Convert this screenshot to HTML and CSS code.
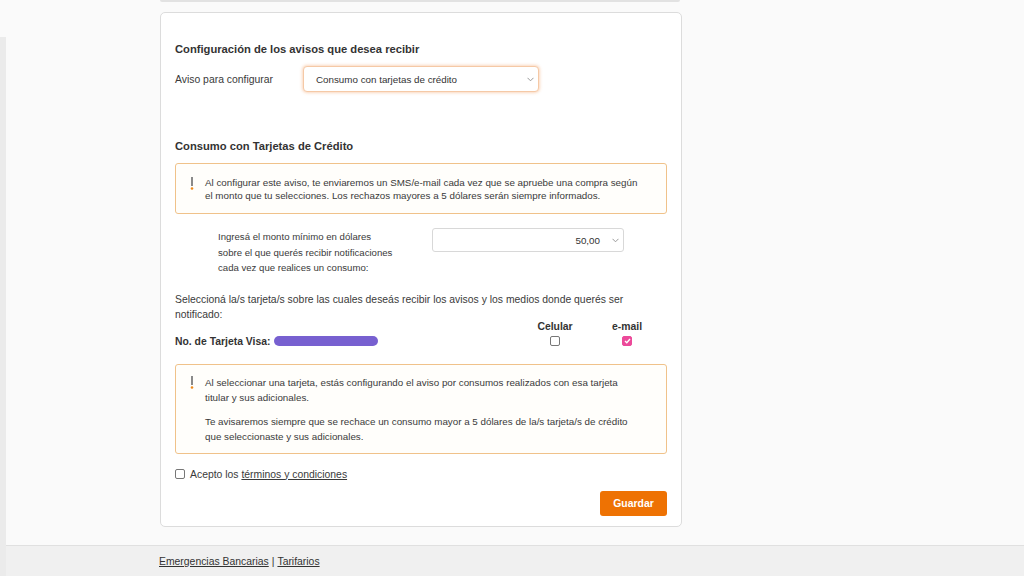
FILE: index.html
```html
<!DOCTYPE html>
<html lang="es">
<head>
    <meta charset="UTF-8">
    <meta name="viewport" content="width=device-width, initial-scale=1.0">
    <title>Configuración de avisos</title>
    <link rel="stylesheet" href="styles.css">
</head>
<body>

    <!-- Left edge strip -->
    <div class="edge"></div>

    <div class="page">
        <div class="main">
            <!-- Bottom of the previous card -->
            <div class="prev-card"></div>

            <div class="card">
                <h3 class="title">Configuración de los avisos que desea recibir</h3>
                <div class="field-row">
                    <label class="field-label">Aviso para configurar</label>
                    <div class="select select-focus">
                        <span>Consumo con tarjetas de crédito</span>
                        <svg class="chevron" width="7" height="5" viewBox="0 0 7 5"><path d="M0.5 0.8 L3.5 3.8 L6.5 0.8" fill="none" stroke="#999" stroke-width="1"/></svg>
                    </div>
                </div>

                <h3 class="title title-section">Consumo con Tarjetas de Crédito</h3>

                <div class="notice">
                    <svg class="bang" width="4" height="13" viewBox="0 0 4 13"><rect x="1" y="0" width="2" height="9" fill="#8a8a8a"/><circle cx="2" cy="11.5" r="1.3" fill="#f08a1c"/></svg>
                    <div class="notice-text">
                        <p>Al configurar este aviso, te enviaremos un SMS/e-mail cada vez que se apruebe una compra según el monto que tu selecciones. Los rechazos mayores a 5 dólares serán siempre informados.</p>
                    </div>
                </div>

                <div class="amount-row">
                    <p class="amount-label">Ingresá el monto mínimo en dólares<br>sobre el que querés recibir notificaciones<br>cada vez que realices un consumo:</p>
                    <div class="select select-amount">
                        <span>50,00</span>
                        <svg class="chevron" width="7" height="5" viewBox="0 0 7 5"><path d="M0.5 0.8 L3.5 3.8 L6.5 0.8" fill="none" stroke="#999" stroke-width="1"/></svg>
                    </div>
                </div>

                <p class="pick-text">Seleccioná la/s tarjeta/s sobre las cuales deseás recibir los avisos y los medios donde querés ser notificado:</p>

                <div class="cards-table">
                    <span></span>
                    <span class="col-head">Celular</span>
                    <span class="col-head">e-mail</span>

                    <span class="card-name">No. de Tarjeta Visa: <span class="redacted"></span></span>
                    <span class="col-check"><span class="check"></span></span>
                    <span class="col-check"><span class="check checked">
                        <svg width="7" height="6" viewBox="0 0 7 6"><path d="M1 3 L2.8 4.8 L6 1" fill="none" stroke="#fff" stroke-width="1.4"/></svg>
                    </span></span>
                </div>

                <div class="notice notice-tall">
                    <svg class="bang" width="4" height="13" viewBox="0 0 4 13"><rect x="1" y="0" width="2" height="9" fill="#8a8a8a"/><circle cx="2" cy="11.5" r="1.3" fill="#f08a1c"/></svg>
                    <div class="notice-text">
                        <p>Al seleccionar una tarjeta, estás configurando el aviso por consumos realizados con esa tarjeta titular y sus adicionales.</p>
                        <p>Te avisaremos siempre que se rechace un consumo mayor a 5 dólares de la/s tarjeta/s de crédito que seleccionaste y sus adicionales.</p>
                    </div>
                </div>

                <div class="terms">
                    <span class="check check-terms"></span>
                    <span>Acepto los <a href="#">términos y condiciones</a></span>
                </div>

                <div class="actions">
                    <button class="btn-save">Guardar</button>
                </div>
            </div>
        </div>

        <!-- Footer -->
        <div class="footer">
            <a href="#">Emergencias Bancarias</a> | <a href="#">Tarifarios</a>
        </div>
    </div>

</body>
</html>
```

FILE: styles.css
```css
body {
    font-family: "Liberation Sans", Arial, sans-serif;
    margin: 0;
    padding: 0;
    display: flex;
    height: 576px;
    overflow: hidden;
    background-color: #fafafa;
    color: #3a3a3a;
}

/* Left edge strip */
.edge {
    width: 6px;
    margin-top: 37px;
    background-color: #ebebeb;
}

.page {
    flex: 1;
    display: flex;
    flex-direction: column;
}

.main {
    flex: 1;
    padding-left: 154px;
}

.prev-card {
    width: 520px;
    height: 0;
    border-bottom: 2px solid #e2e2e2;
    border-radius: 0 0 4px 4px;
}

/* Card */
.card {
    width: 492px;
    margin-top: 10px;
    padding: 29px 14px 10px 14px;
    background-color: #fff;
    border: 1px solid #dcdcdc;
    border-radius: 5px;
}

.title {
    font-size: 11.2px;
    font-weight: bold;
    margin: 0;
    line-height: 14px;
    color: #333;
}

.title-section {
    margin-top: 47px;
}

.field-row {
    display: flex;
    align-items: center;
    margin-top: 10px;
}

.field-label {
    font-size: 10.4px;
    width: 128px;
}

.select {
    display: flex;
    align-items: center;
    justify-content: space-between;
    box-sizing: border-box;
    background-color: #fff;
    font-size: 9.8px;
    color: #333;
}

.select-focus {
    width: 236px;
    height: 26px;
    padding: 0 4px 0 12px;
    border: 1px solid #f5c9a6;
    border-radius: 4px;
    box-shadow: 0 0 3px 1px rgba(240, 140, 70, 0.35);
}

.select-amount {
    width: 192px;
    height: 24px;
    margin-left: auto;
    margin-right: 43px;
    margin-top: -1px;
    padding: 0 4px 0 12px;
    border: 1px solid #d8d8d8;
    border-radius: 3px;
}

.select-amount span {
    margin-left: auto;
    margin-right: 12px;
}

/* Notices */
.notice {
    display: flex;
    margin-top: 10px;
    padding: 12px 26px 11px 14px;
    border: 1px solid #f0c28a;
    border-radius: 3px;
    background-color: #fffefb;
}

.notice .bang {
    flex: none;
    margin-top: 1px;
    margin-right: 11px;
}

.notice-text p {
    font-size: 9.8px;
    line-height: 13px;
    margin: 0;
    color: #3a3a3a;
}

.notice-tall {
    margin-top: 17px;
    padding-top: 10px;
    padding-bottom: 9px;
}

.notice-tall p + p {
    margin-top: 9px;
}

.notice-tall .notice-text p {
    line-height: 15px;
}

/* Amount row */
.amount-row {
    display: flex;
    align-items: flex-start;
    margin-top: 15px;
    padding-left: 43px;
}

.amount-label {
    margin: 0;
    font-size: 9.6px;
    line-height: 15.5px;
    white-space: nowrap;
}

.pick-text {
    font-size: 10.4px;
    line-height: 15px;
    margin: 16px 0 0 0;
}

/* Cards table */
.cards-table {
    display: grid;
    grid-template-columns: 1fr 72px 72px;
    padding-right: 4px;
    row-gap: 4px;
    margin-top: -1px;
    align-items: center;
}

.col-head {
    font-size: 10.4px;
    font-weight: bold;
    text-align: center;
    color: #333;
}

.card-name {
    font-size: 10.4px;
    font-weight: bold;
    display: flex;
    align-items: center;
    color: #333;
}

.redacted {
    display: inline-block;
    width: 104px;
    height: 10px;
    margin-left: 4px;
    border-radius: 5px;
    background-color: #7760d0;
}

.col-check {
    display: flex;
    justify-content: center;
}

.check {
    display: inline-flex;
    align-items: center;
    justify-content: center;
    box-sizing: border-box;
    width: 10px;
    height: 10px;
    border: 1px solid #777;
    border-radius: 2px;
    background-color: #fff;
}

.check.checked {
    border-color: #ec4a9a;
    background-color: #ec4a9a;
}

.terms {
    display: flex;
    align-items: center;
    gap: 5px;
    margin-top: 15px;
    font-size: 10.4px;
}

.check-terms {
    width: 10px;
    height: 10px;
}

.terms a {
    color: #3a3a3a;
}

.actions {
    display: flex;
    justify-content: flex-end;
    margin-top: 11px;
}

.btn-save {
    width: 67px;
    height: 25px;
    background-color: #ee7203;
    border: none;
    border-radius: 3px;
    color: white;
    font-family: "Liberation Sans", Arial, sans-serif;
    font-size: 10.4px;
    font-weight: bold;
    cursor: pointer;
}

/* Footer */
.footer {
    height: 30px;
    border-top: 1px solid #e0e0e0;
    background-color: #f0f0f0;
    padding-left: 153px;
    display: flex;
    align-items: center;
    gap: 3px;
    font-size: 10.4px;
    color: #333;
}

.footer a {
    color: #333;
}
```
